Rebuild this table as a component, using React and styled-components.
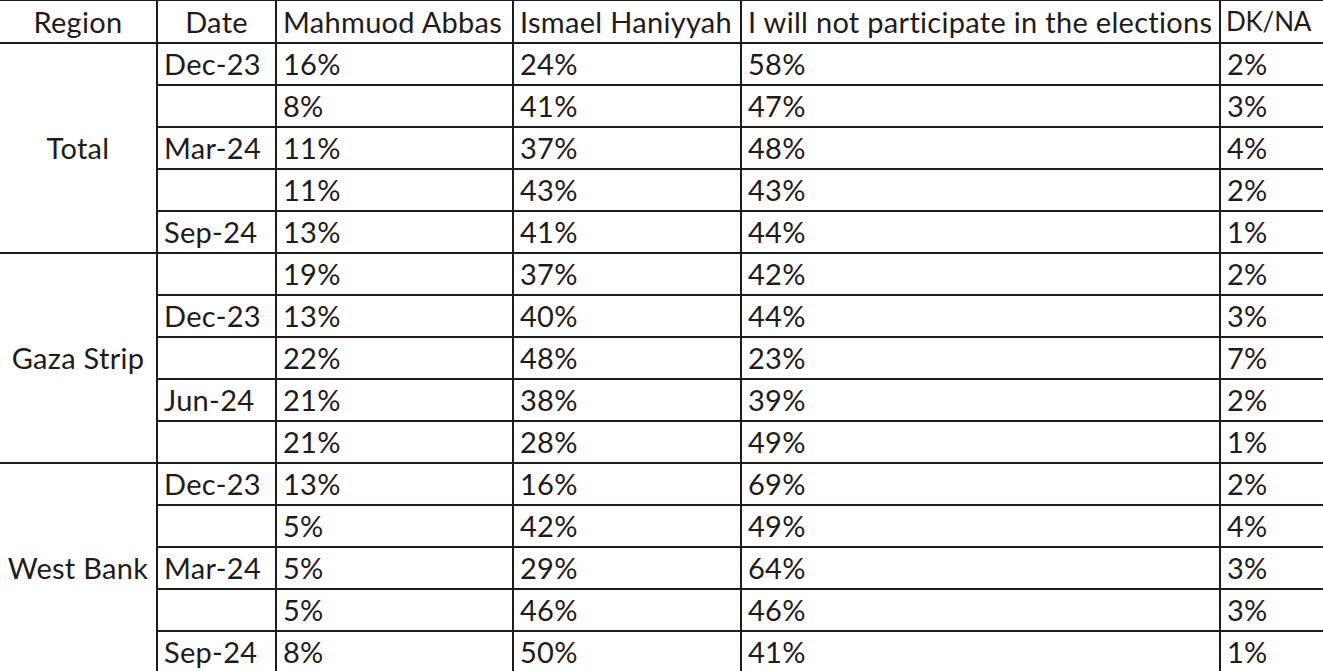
import React from "react";
import styled, { createGlobalStyle } from "styled-components";

const GlobalStyle = createGlobalStyle`
  html, body {
    margin: 0;
    padding: 0;
    background: #fff;
  }
  body {
    font-family: Lato, "Open Sans", sans-serif;
    color: #1f1b1c;
    overflow: hidden;
  }
`;

const columns = [157, 119, 237, 228, 479, 103];

const groups = [
  {
    region: "Total",
    rows: [
      ["Dec-23", "16%", "24%", "58%", "2%"],
      ["", "8%", "41%", "47%", "3%"],
      ["Mar-24", "11%", "37%", "48%", "4%"],
      ["", "11%", "43%", "43%", "2%"],
      ["Sep-24", "13%", "41%", "44%", "1%"],
    ],
  },
  {
    region: "Gaza Strip",
    rows: [
      ["", "19%", "37%", "42%", "2%"],
      ["Dec-23", "13%", "40%", "44%", "3%"],
      ["", "22%", "48%", "23%", "7%"],
      ["Jun-24", "21%", "38%", "39%", "2%"],
      ["", "21%", "28%", "49%", "1%"],
    ],
  },
  {
    region: "West Bank",
    rows: [
      ["Dec-23", "13%", "16%", "69%", "2%"],
      ["", "5%", "42%", "49%", "4%"],
      ["Mar-24", "5%", "29%", "64%", "3%"],
      ["", "5%", "46%", "46%", "3%"],
      ["Sep-24", "8%", "50%", "41%", "1%"],
    ],
  },
];

const App = () => {
  return (
    <>
      <GlobalStyle />
      <Table>
        <colgroup>
          {columns.map((w, i) => (
            <col key={i} style={{ width: w }} />
          ))}
        </colgroup>
        <thead>
          <Row>
            <HeadCell center>Region</HeadCell>
            <HeadCell center>Date</HeadCell>
            <HeadCell>Mahmuod Abbas</HeadCell>
            <HeadCell>Ismael Haniyyah</HeadCell>
            <HeadCell>I will not participate in the elections</HeadCell>
            <HeadCell tight>DK/NA</HeadCell>
          </Row>
        </thead>
        <tbody>
          {groups.map((group) =>
            group.rows.map((row, i) => (
              <Row key={group.region + i}>
                {i === 0 && (
                  <RegionCell rowSpan={group.rows.length}>
                    {group.region}
                  </RegionCell>
                )}
                {row.map((value, j) => (
                  <Cell key={j}>{value}</Cell>
                ))}
              </Row>
            ))
          )}
        </tbody>
      </Table>
    </>
  );
};

const Table = styled.table`
  width: 1323px;
  table-layout: fixed;
  border-collapse: collapse;
  font-size: 29px;
  letter-spacing: 0.3px;
  line-height: 1;
`;

const Row = styled.tr`
  height: 42px;
`;

const Cell = styled.td`
  border: 2px solid #1f1b1c;
  padding: 0 6px;
  white-space: nowrap;
  overflow: hidden;
  text-align: left;
  vertical-align: middle;

  &:last-child {
    border-right: none;
  }
`;

const HeadCell = styled.th`
  border: 2px solid #1f1b1c;
  border-top-width: 1px;
  padding: 0 ${(p) => (p.tight ? "2px 0 5px" : "6px")};
  white-space: nowrap;
  overflow: hidden;
  font-weight: 400;
  font-size: ${(p) => (p.tight ? "26px" : "inherit")};
  letter-spacing: ${(p) => (p.tight ? "-0.2px" : "inherit")};
  text-align: ${(p) => (p.center ? "center" : "left")};
  vertical-align: middle;

  &:first-child {
    border-left: none;
  }
  &:last-child {
    border-right: none;
  }
`;

const RegionCell = styled.td`
  border: 2px solid #1f1b1c;
  border-left: none;
  padding: 0 4px;
  white-space: nowrap;
  text-align: center;
  vertical-align: middle;
`;

export default App;
